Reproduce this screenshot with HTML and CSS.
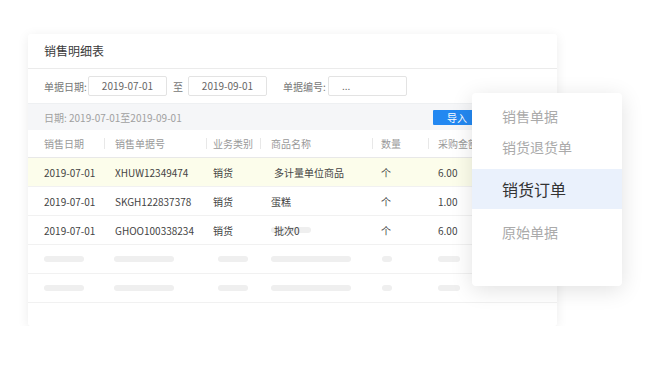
FILE: index.html
```html
<!DOCTYPE html>
<html lang="zh-CN">
<head>
  <meta charset="UTF-8" />
  <meta name="viewport" content="width=device-width, initial-scale=1.0" />
  <title>销售明细表</title>
  <link rel="stylesheet" href="styles.css">
</head>
<body>
  <div class="card">
    <div class="card-title">销售明细表</div>
    <div class="filters">
      <span class="label">单据日期:</span>
      <div class="input center">2019-07-01</div>
      <span class="to">至</span>
      <div class="input center">2019-09-01</div>
      <span class="label second">单据编号:</span>
      <div class="input">...</div>
    </div>
    <div class="band">
      <span>日期: 2019-07-01至2019-09-01</span>
      <button class="btn">导入</button>
    </div>
    <div class="table">
      <div class="row head">
        <div class="cell">销售日期</div>
        <div class="cell">销售单据号</div>
        <div class="cell">业务类别</div>
        <div class="cell">商品名称</div>
        <div class="cell">数量</div>
        <div class="cell">采购金额</div>
      </div>
      <div class="row hl">
        <div class="cell">2019-07-01</div>
        <div class="cell">XHUW12349474</div>
        <div class="cell">销货</div>
        <div class="cell shift">多计量单位商品</div>
        <div class="cell">个</div>
        <div class="cell">6.00</div>
      </div>
      <div class="row">
        <div class="cell">2019-07-01</div>
        <div class="cell">SKGH122837378</div>
        <div class="cell">销货</div>
        <div class="cell">蛋糕</div>
        <div class="cell">个</div>
        <div class="cell">1.00</div>
      </div>
      <div class="row">
        <div class="cell">2019-07-01</div>
        <div class="cell">GHOO100338234</div>
        <div class="cell">销货</div>
        <div class="cell"><span class="bar w40"></span><span class="over">批次0</span></div>
        <div class="cell">个</div>
        <div class="cell">6.00</div>
      </div>
      <div class="row">
        <div class="cell"><span class="bar w40"></span></div>
        <div class="cell"><span class="bar w60 pull"></span></div>
        <div class="cell"><span class="bar w30 push"></span></div>
        <div class="cell"><span class="bar w80"></span></div>
        <div class="cell"><span class="bar w10 push1"></span></div>
        <div class="cell"><span class="bar w22"></span></div>
      </div>
      <div class="row">
        <div class="cell"><span class="bar w40"></span></div>
        <div class="cell"><span class="bar w60 pull"></span></div>
        <div class="cell"><span class="bar w30 push"></span></div>
        <div class="cell"><span class="bar w80"></span></div>
        <div class="cell"><span class="bar w10 push1"></span></div>
        <div class="cell"><span class="bar w22"></span></div>
      </div>
    </div>
  </div>

  <div class="menu">
    <div class="item">销售单据</div>
    <div class="item">销货退货单</div>
    <div class="item active">销货订单</div>
    <div class="item last">原始单据</div>
  </div>
</body>
</html>
```

FILE: styles.css
```css
body {
  margin: 0;
  background: #fff;
  font-family: "Noto Sans CJK SC", "Noto Sans", sans-serif;
  color: #333;
}
.card {
  width: 529px;
  height: 292px;
  margin: 34px 0 0 28px;
  background: #fff;
  border-radius: 3px;
  box-shadow: 0 2px 12px rgba(0, 0, 0, 0.08);
  overflow: hidden;
}
.card-title {
  height: 34px;
  line-height: 34px;
  padding-left: 16px;
  font-size: 12px;
  color: #3a3a3a;
  border-bottom: 1px solid #ebebeb;
}
.filters {
  height: 34px;
  display: flex;
  align-items: center;
  padding-left: 16px;
  font-size: 10px;
  color: #777;
}
.label {
  width: 44px;
}
.label.second {
  margin-left: 16px;
  width: 45px;
}
.to {
  margin: 0 5px 0 6px;
  width: 10px;
}
.input {
  width: 79px;
  height: 20px;
  box-sizing: border-box;
  border: 1px solid #e3e3e3;
  border-radius: 2px;
  line-height: 18px;
  padding-left: 13px;
  color: #666;
}
.input.center {
  padding-left: 0;
  text-align: center;
}
.band {
  height: 27px;
  box-sizing: border-box;
  background: #f5f6f8;
  border-top: 1px solid #eef0f2;
  display: flex;
  align-items: center;
  justify-content: space-between;
  padding: 0 76px 0 16px;
  font-size: 10px;
  color: #a0a0a0;
}
.btn {
  width: 48px;
  height: 15px;
  border: 0;
  border-radius: 1px;
  background: #2388f1;
  color: #fff;
  font-family: inherit;
  font-size: 10px;
  line-height: 15px;
  padding: 0;
}
.row {
  display: grid;
  grid-template-columns: 60px 102px 54px 112px 56px 1fr;
  height: 29px;
  box-sizing: border-box;
  padding-left: 16px;
  border-bottom: 1px solid #f1f1f1;
  font-size: 10px;
  color: #444;
}
.row.head {
  height: 28px;
  color: #999;
  border-bottom-color: #e8e8e8;
}
.row.hl {
  background: #fcfdeb;
}
.cell {
  display: flex;
  align-items: center;
  white-space: nowrap;
}
.row .cell:nth-child(2) { --pad: 11px; }
.row .cell:nth-child(3) { --pad: 7px; }
.row .cell:nth-child(4) { --pad: 11px; }
.row .cell:nth-child(5) { --pad: 9px; }
.row .cell:nth-child(6) { --pad: 10px; }
.row:not(.head) .cell:nth-child(n+2) {
  padding-left: var(--pad);
}
.row.head .cell:nth-child(n+2)::before {
  content: "";
  width: 1px;
  height: 11px;
  background: #e8e8e8;
  margin-right: calc(var(--pad) - 1px);
}
.cell.shift {
  padding-left: 14px !important;
}
.bar {
  display: inline-block;
  height: 6px;
  border-radius: 3px;
  background: #efefef;
}
.w10 { width: 10px; }
.w22 { width: 22px; }
.w30 { width: 30px; }
.w40 { width: 40px; }
.w60 { width: 60px; }
.w80 { width: 80px; }
.pull { margin-left: -1px; }
.push { margin-left: 5px; }
.push1 { margin-left: 1px; }
.over {
  margin-left: -37px;
}
.menu {
  position: absolute;
  left: 472px;
  top: 93px;
  width: 150px;
  height: 193px;
  box-sizing: border-box;
  padding-top: 7px;
  background: #fff;
  border-radius: 4px;
  box-shadow: 0 4px 22px rgba(0, 0, 0, 0.12);
}
.item {
  height: 31px;
  display: flex;
  align-items: center;
  padding-left: 30px;
  font-size: 14px;
  color: #aaa;
}
.item.active {
  height: 40px;
  margin-top: 7px;
  background: #eaf1fc;
  color: #333;
  font-size: 16px;
}
.item.last {
  height: 46px;
}
```
